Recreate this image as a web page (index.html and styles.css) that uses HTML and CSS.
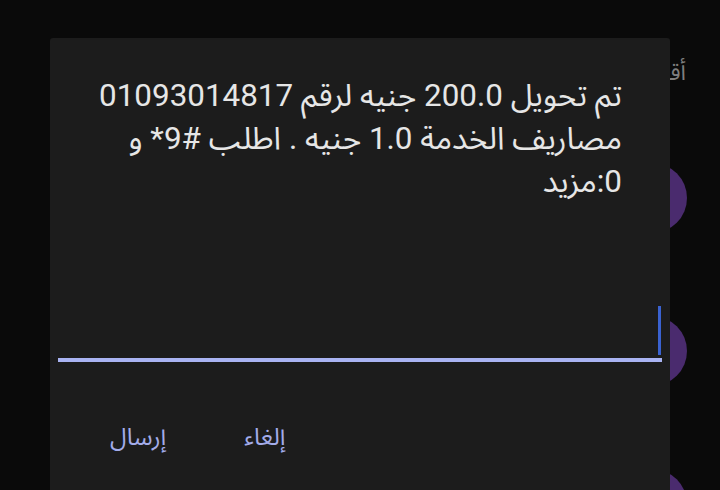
FILE: index.html
```html
<!DOCTYPE html>
<html lang="ar">
<head>
<meta charset="utf-8">
<link rel="stylesheet" href="styles.css">
</head>
<body>
<div class="screen">
  <div class="backdrop">
    <div class="bg-title" dir="rtl">أقساط</div>
    <div class="bg-list">
      <div class="avatar"></div>
      <div class="avatar"></div>
      <div class="avatar"></div>
    </div>
  </div>
  <div class="dialog">
    <div class="message" dir="rtl">تم تحويل 200.0 جنيه لرقم 01093014817 مصاريف الخدمة 1.0 جنيه . اطلب #9* و 0:مزيد</div>
    <div class="field"><span class="cursor"></span></div>
    <div class="actions" dir="rtl">
      <span class="btn btn-cancel">إلغاء</span>
      <span class="btn btn-send">إرسال</span>
    </div>
  </div>
</div>
</body>
</html>
```
FILE: styles.css
```css
html, body {
  margin: 0;
  padding: 0;
  background: #0a0a0a;
}
.screen {
  position: relative;
  width: 720px;
  height: 490px;
  overflow: hidden;
  font-family: Roboto, "Noto Sans Arabic", "DejaVu Sans", sans-serif;
}
.backdrop {
  display: flex;
  flex-direction: column;
  padding: 58px 0 0 617px;
}
.bg-title {
  width: 69px;
  color: #7e7e7e;
  font-size: 23px;
  line-height: 30px;
  text-align: right;
  white-space: nowrap;
}
.bg-list {
  display: flex;
  flex-direction: column;
  gap: 83px;
  margin-top: 75px;
}
.avatar {
  width: 70px;
  height: 70px;
  border-radius: 50%;
  background: #4a2b6e;
}
.dialog {
  position: absolute;
  left: 50px;
  top: 38px;
  width: 620px;
  height: 470px;
  background: #1c1c1c;
  border-radius: 3px;
  display: flex;
  flex-direction: column;
}
.message {
  padding: 36px 48px 0 20px;
  color: #e6e6e6;
  font-size: 31.4px;
  line-height: 43px;
  text-align: right;
}
.field {
  margin: 103px 8px 0;
  height: 49px;
  padding-bottom: 3px;
  padding-right: 1px;
  border-bottom: 4px solid #a9b3f2;
  display: flex;
  justify-content: flex-end;
}
.cursor {
  width: 3px;
  height: 49px;
  background: #3a62d0;
}
.actions {
  display: flex;
  justify-content: flex-end;
  gap: 78px;
  padding: 57px 0 0 60px;
}
.btn {
  color: #a3acea;
  font-size: 24px;
  line-height: 36px;
}
```
